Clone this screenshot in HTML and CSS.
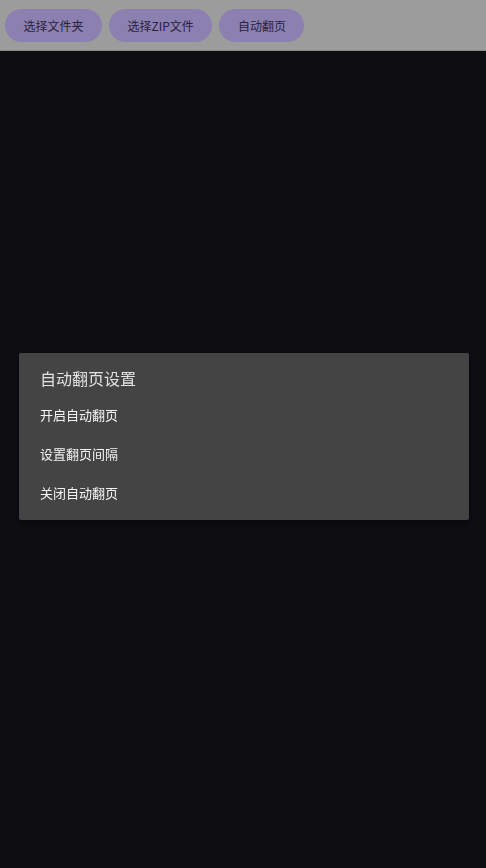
FILE: index.html
```html
<!DOCTYPE html>
<html lang="zh-CN">

<head>
    <meta charset="UTF-8">
    <meta name="viewport" content="width=device-width, initial-scale=1.0">
    <title>阅读器</title>
    <link rel="stylesheet" href="styles.css">
</head>

<body>
    <div class="toolbar">
        <button class="tool-btn">选择文件夹</button>
        <button class="tool-btn">选择ZIP文件</button>
        <button class="tool-btn">自动翻页</button>
    </div>
    <div class="viewer"></div>

    <div class="scrim">
        <div class="dialog">
            <div class="dialog-title">自动翻页设置</div>
            <ul class="dialog-list">
                <li>开启自动翻页</li>
                <li>设置翻页间隔</li>
                <li>关闭自动翻页</li>
            </ul>
        </div>
    </div>
</body>

</html>
```

FILE: styles.css
```css
html,
body {
    margin: 0;
    padding: 0;
    height: 100%;
}

body {
    background-color: #0e0d12;
    font-family: "Noto Sans CJK SC", "Noto Sans", sans-serif;
    overflow: hidden;
}

.toolbar {
    display: flex;
    gap: 7px;
    height: 51px;
    padding: 9px 5px 0;
    box-sizing: border-box;
    background-color: #9c9c9c;
    border-bottom: 1px solid #8a8a8a;
}

.tool-btn {
    height: 33px;
    padding: 0 18.5px;
    border: none;
    border-radius: 17px;
    background-color: #8b80b0;
    color: #2a2340;
    font-family: inherit;
    font-size: 12px;
    line-height: 32px;
}

.viewer {
    height: calc(100% - 51px);
}

.scrim {
    position: fixed;
    top: 0;
    left: 0;
    right: 0;
    bottom: 0;
    display: flex;
    align-items: center;
    justify-content: center;
    padding: 5px 0 0 2px;
}

.dialog {
    width: 450px;
    padding: 13px 0 8px;
    background-color: #444444;
    border-radius: 2px;
    box-shadow: 0 2px 6px rgba(0, 0, 0, 0.5);
}

.dialog-title {
    padding: 0 21px;
    margin-bottom: 5px;
    font-size: 16px;
    line-height: 24px;
    color: #e2e2e2;
}

.dialog-list {
    list-style: none;
    margin: 0;
    padding: 0;
}

.dialog-list li {
    height: 39px;
    line-height: 39px;
    padding: 0 21px;
    font-size: 13px;
    color: #f4f4f4;
}
```
